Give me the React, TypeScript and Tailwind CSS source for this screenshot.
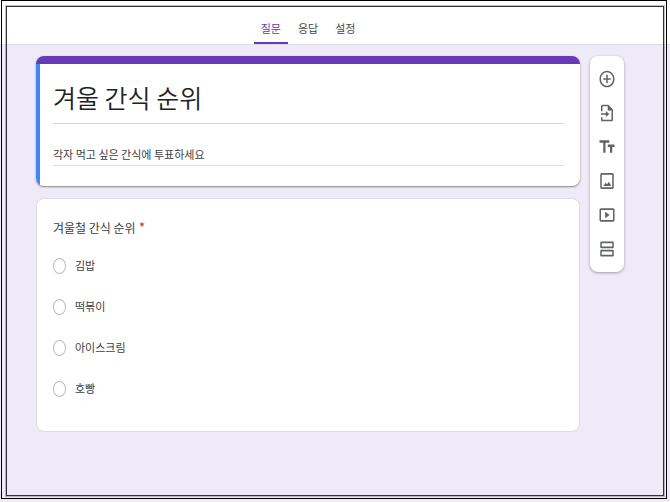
import React from 'react';

const tabs = ['질문', '응답', '설정'];

const options = ['김밥', '떡볶이', '아이스크림', '호빵'];

const tools = [
  {
    label: '질문 추가',
    path: 'M13 7h-2v4H7v2h4v4h2v-4h4v-2h-4V7zm-1-5C6.48 2 2 6.48 2 12s4.48 10 10 10 10-4.48 10-10S17.52 2 12 2zm0 18c-4.41 0-8-3.59-8-8s3.59-8 8-8 8 3.59 8 8-3.59 8-8 8z',
  },
  {
    label: '질문 가져오기',
    path: 'M14 2H6c-1.1 0-2 .9-2 2v6h2V4h7v5h5v11H6v-3H4v3c0 1.1.9 2 2 2h12c1.1 0 2-.9 2-2V8l-6-6zM4 12.2v2h6.5v2.6l4.5-3.6-4.5-3.6v2.6H4z',
  },
  {
    label: '제목 및 설명 추가',
    path: 'M2 4v3h5v12h3V7h5V4H2zm20 5h-9v3h3v7h3v-7h3V9z',
  },
  {
    label: '이미지 추가',
    path: 'M19 4.5v15H5v-15h14m0-2H5c-1.1 0-2 .9-2 2v15c0 1.1.9 2 2 2h14c1.1 0 2-.9 2-2v-15c0-1.1-.9-2-2-2zm-4.5 10.500l-2.500 3-2-1.800L7 18h10.500l-3-5z',
  },
  {
    label: '동영상 추가',
    path: 'M9.5 8v8l6-4-6-4zM20 4H4c-1.1 0-2 .9-2 2v12c0 1.1.9 2 2 2h16c1.1 0 2-.9 2-2V6c0-1.1-.9-2-2-2zm0 14H4V6h16v12z',
  },
  {
    label: '섹션 추가',
    path: 'M20 3H4c-.6 0-1 .4-1 1v6c0 .6.4 1 1 1h16c.6 0 1-.4 1-1V4c0-.6-.4-1-1-1zm-1 6H5V5h14v4zm1 4H4c-.6 0-1 .4-1 1v6c0 .6.4 1 1 1h16c.6 0 1-.4 1-1v-6c0-.6-.4-1-1-1zm-1 6H5v-4h14v4z',
  },
];

const Header: React.FC = () => (
  <header className="flex h-[45px] items-end justify-center border-b border-[#dfdce6] bg-white pr-[54px]">
    <nav className="flex gap-[3px]">
      {tabs.map((tab, i) => (
        <button
          key={tab}
          type="button"
          className={
            i === 0
              ? 'border-b-2 border-[#673ab7] px-[7px] pb-[6px] text-[11px] leading-4 text-[#673ab7]'
              : 'border-b-2 border-transparent px-[7px] pb-[6px] text-[11px] leading-4 text-[#444746]'
          }
        >
          {tab}
        </button>
      ))}
    </nav>
  </header>
);

const TitleCard: React.FC = () => (
  <section className="overflow-hidden rounded-lg bg-white shadow-[0_1px_2px_rgba(0,0,0,0.45)]">
    <div className="h-2 bg-[#673ab7]" />
    <div className="border-l-4 border-[#4285f4] pt-3 pr-4 pb-5 pl-[13px]">
      <input
        aria-label="설문지 제목"
        defaultValue="겨울 간식 순위"
        className="block h-12 w-full border-b border-[#d3d1db] pb-[6px] text-[25px] font-[350] text-[#202124] outline-none"
      />
      <input
        aria-label="설문지 설명"
        defaultValue="각자 먹고 싶은 간식에 투표하세요"
        className="mt-5 block h-[22px] w-full border-b border-[#dadce0] pb-[2px] text-[11px] text-[#3c4043] outline-none"
      />
    </div>
  </section>
);

const QuestionCard: React.FC = () => (
  <section className="rounded-lg border border-[#dddbe4] bg-white px-4 pt-[18px] pb-[22px]">
    <fieldset>
      <legend className="text-[12px] leading-5 text-[#3c4043]">
        겨울철 간식 순위<span className="ml-[3px] text-[14px] text-[#d93025]">*</span>
      </legend>
      <div className="pt-[7px]">
        {options.map((option) => (
          <label key={option} className="flex h-[41px] items-center gap-[9px] text-[11px] text-[#3c4043]">
            <input
              type="radio"
              name="snack"
              className="h-4 w-[13px] appearance-none rounded-[50%] border border-[#bdbdbd] checked:border-4 checked:border-[#673ab7]"
            />
            {option}
          </label>
        ))}
      </div>
    </fieldset>
  </section>
);

const Toolbar: React.FC = () => (
  <aside className="flex w-[34px] shrink-0 flex-col rounded-lg bg-white py-[6px] shadow-[0_1px_3px_rgba(0,0,0,0.35)]">
    {tools.map((tool) => (
      <button
        key={tool.label}
        type="button"
        aria-label={tool.label}
        className="flex h-[34px] items-center justify-center text-[#5f6368]"
      >
        <svg viewBox="0 0 24 24" preserveAspectRatio="none" fill="currentColor" className="h-5 w-[18px]">
          <path d={tool.path} />
        </svg>
      </button>
    ))}
  </aside>
);

export default function App() {
  return (
    <div className="relative min-h-screen bg-[#eeeaf8] font-['Noto_Sans_CJK_KR',sans-serif]">
      <Header />
      <main className="flex items-start gap-[10px] pt-[11px] pr-[46px] pb-16 pl-9">
        <div className="flex min-w-0 flex-1 flex-col gap-3">
          <TitleCard />
          <QuestionCard />
        </div>
        <Toolbar />
      </main>

      {/* Double frame drawn over the page */}
      <div className="pointer-events-none absolute top-0 right-[3px] bottom-[3px] left-px border border-black pt-[5px] pr-[2px] pb-[2px] pl-1">
        <div className="h-full border border-[#33323a] outline outline-[#33323a]/30" />
      </div>
    </div>
  );
}
